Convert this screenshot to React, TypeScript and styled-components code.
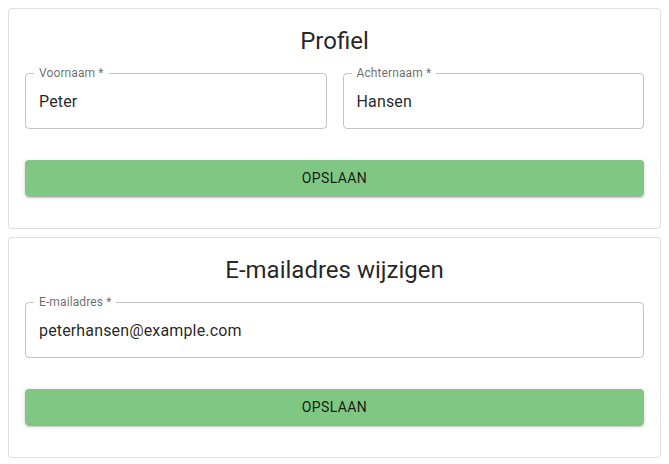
import React, { useState } from "react";
import styled, { createGlobalStyle } from "styled-components";

const GlobalStyle = createGlobalStyle`
  body {
    margin: 8px;
    font-family: Roboto, "Helvetica", Arial, sans-serif;
    color: rgba(0, 0, 0, 0.87);
    background: #fff;
  }
  * { box-sizing: border-box; }
`;

type FieldProps = {
  label: string;
  value: string;
  onChange: (v: string) => void;
};

const TextField = ({ label, value, onChange }: FieldProps) => (
  <FieldRoot>
    <FieldLabel>{label} *</FieldLabel>
    <FieldInput value={value} onChange={(e) => onChange(e.target.value)} />
    <Outline aria-hidden>
      <Legend>
        <span>{label} *</span>
      </Legend>
    </Outline>
  </FieldRoot>
);

const App = () => {
  const [firstName, setFirstName] = useState("Peter");
  const [lastName, setLastName] = useState("Hansen");
  const [email, setEmail] = useState("peterhansen@example.com");

  return (
    <>
      <GlobalStyle />
      <Card>
        <Title>Profiel</Title>
        <Row>
          <TextField label="Voornaam" value={firstName} onChange={setFirstName} />
          <TextField label="Achternaam" value={lastName} onChange={setLastName} />
        </Row>
        <SaveButton>Opslaan</SaveButton>
      </Card>
      <Card>
        <Title>E-mailadres wijzigen</Title>
        <Row>
          <TextField label="E-mailadres" value={email} onChange={setEmail} />
        </Row>
        <SaveButton>Opslaan</SaveButton>
      </Card>
    </>
  );
};

const Card = styled.section`
  display: flex;
  flex-direction: column;
  border: 1px solid rgba(0, 0, 0, 0.12);
  border-radius: 4px;
  padding: 16px 16px 32px;
  margin-bottom: 8px;
  background: #fff;
`;

const Title = styled.h2`
  margin: 0 0 16px;
  font-size: 24px;
  font-weight: 400;
  line-height: 32px;
  text-align: center;
`;

const Row = styled.div`
  display: flex;
  gap: 16px;
  margin-bottom: 31px;
`;

const FieldRoot = styled.div`
  position: relative;
  flex: 1;
  display: flex;
  height: 56px;
`;

const FieldLabel = styled.label`
  position: absolute;
  left: 14px;
  top: -8px;
  font-size: 12px;
  line-height: 16px;
  letter-spacing: 0.11px;
  color: rgba(0, 0, 0, 0.6);
  pointer-events: none;
`;

const FieldInput = styled.input`
  flex: 1;
  border: 0;
  background: none;
  outline: none;
  padding: 16.5px 14px;
  font-family: inherit;
  font-size: 16px;
  line-height: 23px;
  letter-spacing: 0.15px;
  color: rgba(0, 0, 0, 0.87);
  min-width: 0;
`;

const Outline = styled.fieldset`
  position: absolute;
  inset: -5px 0 0;
  margin: 0;
  padding: 0 8px;
  border: 1px solid rgba(0, 0, 0, 0.23);
  border-radius: 4px;
  pointer-events: none;
`;

const Legend = styled.legend`
  font-size: 12px;
  letter-spacing: 0.11px;
  height: 11px;
  padding: 0;
  visibility: hidden;
  white-space: nowrap;

  span {
    padding: 0 5px;
    display: inline-block;
  }
`;

const SaveButton = styled.button`
  height: 36px;
  border: 0;
  border-radius: 4px;
  background: #81c784;
  color: rgba(0, 0, 0, 0.87);
  font-family: inherit;
  font-size: 14px;
  font-weight: 400;
  letter-spacing: 0.4px;
  text-transform: uppercase;
  cursor: pointer;
  box-shadow: 0 3px 1px -2px rgba(0, 0, 0, 0.2), 0 2px 2px 0 rgba(0, 0, 0, 0.14),
    0 1px 5px 0 rgba(0, 0, 0, 0.12);
`;

export default App;
